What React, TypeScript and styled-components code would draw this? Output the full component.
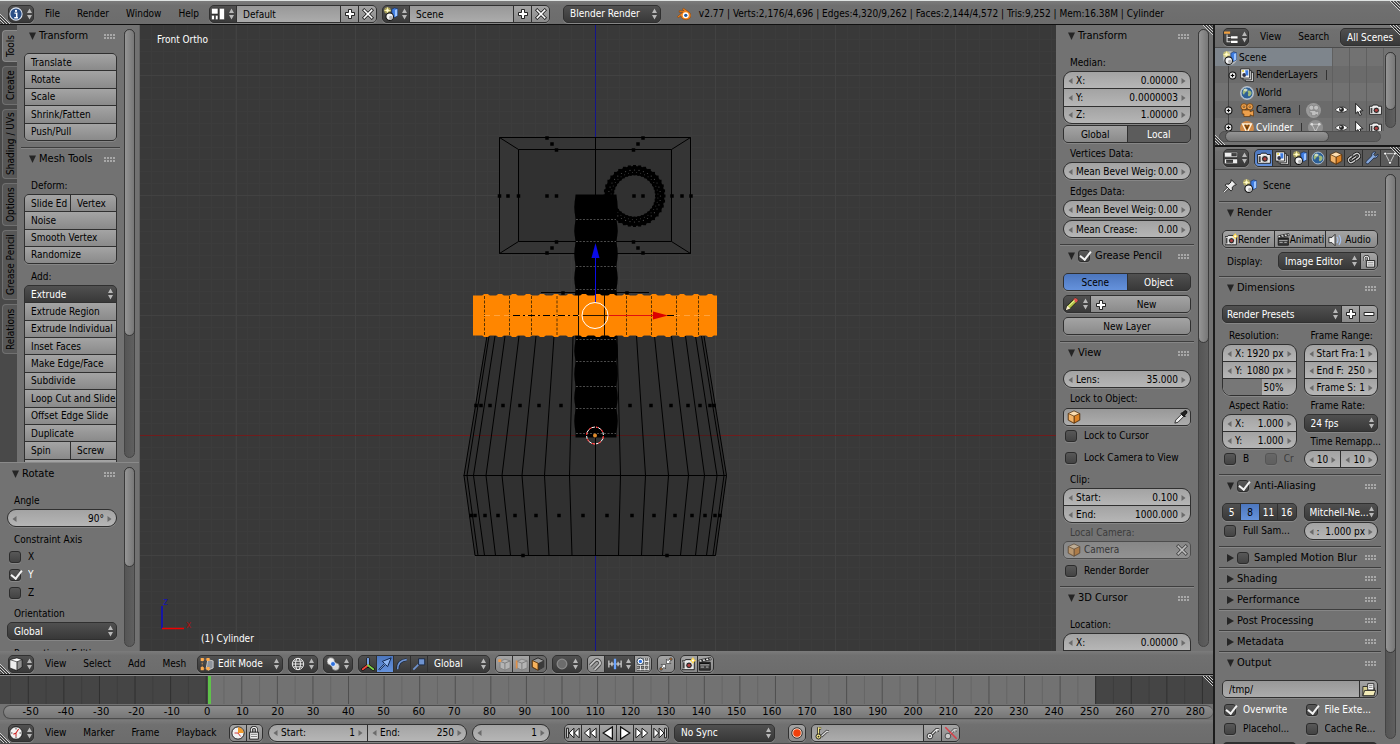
import React from "react";
import styled, { createGlobalStyle } from "styled-components";

const Global = createGlobalStyle`
  * { box-sizing: border-box; }
  html, body, #root { height: 100%; }
  body { margin: 0; background: #727272; overflow: hidden; }
  body, button, input, select {
    font-family: "DejaVu Sans Condensed", "DejaVu Sans", sans-serif;
    font-size: 10px;
    line-height: 16px;
    color: #000;
  }
  button, input, select { margin: 0; padding: 0; border: 0; background: none; border-radius: 0; outline: none; }
  svg { display: block; flex: none; }
`;

/* ---------- shared surfaces ---------- */

const EDGE = "#303030";
const tool = "linear-gradient(#a4a4a4, #8a8a8a)";
const num = "linear-gradient(#a3a3a3, #b6b6b6)";
const field = "linear-gradient(#989898, #adadad)";
const menu = "linear-gradient(#505050, #383838)";
const blue = "linear-gradient(#4c76bd, #6592dc)";

const Shell = styled.div`
  display: flex;
  flex-direction: column;
  height: 100vh;
  border-top: 1px solid #dfe3e2;
`;
const Main = styled.div`
  display: flex;
  flex: 1;
  min-height: 0;
`;
const Column = styled.div`
  display: flex;
  flex-direction: column;
  flex: 1;
  min-width: 0;
  border-right: 2px solid #1c1c1c;
`;
const Side = styled.aside`
  display: flex;
  flex-direction: column;
  width: 185px;
  flex: none;
`;
const Bar = styled.header<{ $h?: number; $dark?: boolean; $flush?: boolean }>`
  position: relative;
  display: flex;
  align-items: center;
  flex: none;
  height: ${(p) => p.$h ?? 24}px;
  padding: ${(p) => (p.$flush ? 0 : 2)}px 0 0 8px;
  gap: 5px;
  overflow: hidden;
  background: linear-gradient(#7b7b7b, #707070 20%, #6c6c6c);
  border-bottom: 1px solid ${(p) => (p.$dark ? "#101010" : "#4c4c4c")};
`;
const MenuList = styled.nav<{ $w: number }>`
  display: flex;
  gap: 17px;
  width: ${(p) => p.$w}px;
  padding-left: 6px;
  flex: none;
`;
const MenuItem = styled.button`
  white-space: nowrap;
`;

const Group = styled.div<{ $h?: number; $w?: number; $r?: number; $top?: number; $cols?: string; $dim?: boolean }>`
  display: grid;
  grid-auto-rows: 1fr;
  grid-template-columns: ${(p) => p.$cols ?? "minmax(0, 1fr)"};
  gap: 1px;
  height: ${(p) => p.$h ?? 18}px;
  ${(p) => p.$w && `width: ${p.$w}px;`}
  margin-top: ${(p) => p.$top ?? 0}px;
  flex: none;
  border: 1px solid ${EDGE};
  border-radius: ${(p) => p.$r ?? 5}px;
  background: ${EDGE};
  overflow: hidden;
  box-shadow: 0 1px 0 #868686;
  opacity: ${(p) => (p.$dim ? 0.55 : 1)};
`;
const Button = styled.button<{ $bg?: string; $white?: boolean; $left?: boolean }>`
  display: flex;
  align-items: center;
  justify-content: ${(p) => (p.$left ? "flex-start" : "center")};
  padding: 1px 0 0 ${(p) => (p.$left ? 6 : 0)}px;
  min-width: 0;
  min-height: 0;
  overflow: hidden;
  white-space: nowrap;
  background: ${(p) => p.$bg ?? tool};
  color: ${(p) => (p.$white ? "#fff" : "#000")};
  line-height: 14px;
`;
const GlyphButton = styled(Button)`
  padding-top: 0;
`;
const Pair = styled.div`
  display: grid;
  grid-template-columns: 1fr 1fr;
  gap: 1px;
  min-height: 0;
`;
const Columns = styled.div<{ $top?: number }>`
  display: grid;
  grid-template-columns: minmax(0, 1fr) minmax(0, 1fr);
  column-gap: 7px;
  margin-top: ${(p) => p.$top ?? 0}px;
`;
const Label = styled.div<{ $top?: number; $dim?: boolean }>`
  height: 18px;
  flex: none;
  line-height: 20px;
  padding-left: 7px;
  margin-top: ${(p) => p.$top ?? 0}px;
  white-space: nowrap;
  color: ${(p) => (p.$dim ? "#3c3c3c" : "#000")};
`;

/* ---------- fields ---------- */

const NumBox = styled.label<{ $fill?: boolean }>`
  display: flex;
  align-items: center;
  min-width: 0;
  min-height: 0;
  padding: 1px 4px 0;
  gap: 3px;
  line-height: 14px;
  white-space: nowrap;
  background: ${(p) => (p.$fill ? "linear-gradient(90deg, #777 54%, transparent 54%), " : "") + num};
`;
const NumInput = styled.input`
  flex: 1;
  width: 0;
  min-width: 0;
  height: 14px;
  line-height: 14px;
  text-align: right;
`;
const NumText = styled.span`
  display: flex;
  flex: 1;
  min-width: 0;
`;
const Tri = ({ d }: { d: "l" | "r" }) => (
  <svg width="5" height="8" viewBox="0 0 5 8">
    <path d={d === "l" ? "M4.5 1v6L.5 4z" : "M.5 1v6l4-3z"} fill="#6b6b6b" />
  </svg>
);
const Num = ({ label, value, name, bare, fill }: { label?: string; value: string; name?: string; bare?: boolean; fill?: boolean }) => (
  <NumBox $fill={fill}>
    {bare ? <svg width="5" height="8" /> : <Tri d="l" />}
    <NumText>
      {label}
      <NumInput defaultValue={value} aria-label={name ?? label} />
    </NumText>
    {bare ? <svg width="5" height="8" /> : <Tri d="r" />}
  </NumBox>
);

const SelectBox = styled.span`
  position: relative;
  display: flex;
  align-items: center;
  min-width: 0;
  min-height: 0;
  background: ${menu};
  svg { position: absolute; right: 2px; pointer-events: none; }
`;
const SelectEl = styled.select<{ $pad?: number }>`
  appearance: none;
  width: 100%;
  height: 16px;
  line-height: 14px;
  padding: 1px 8px 0 ${(p) => p.$pad ?? 6}px;
  color: #fff;
`;
const UpDown = ({ w = 7 }: { w?: number }) => (
  <svg width={w} height="12" viewBox="0 0 7 12">
    <path d="M3.5.5 6 5H1zM3.5 11.5 1 7h5z" fill="#b8b8b8" />
  </svg>
);
const Select = ({ name, value, pad }: { name: string; value: string; pad?: number }) => (
  <SelectBox>
    <SelectEl $pad={pad} aria-label={name} defaultValue={value}>
      <option>{value}</option>
    </SelectEl>
    <UpDown />
  </SelectBox>
);
const TextInput = styled.input`
  min-width: 0;
  width: 100%;
  padding: 1px 0 0 6px;
  background: ${field};
`;
const IconInput = styled.label`
  display: flex;
  align-items: center;
  gap: 3px;
  min-width: 0;
  padding: 0 2px 0 3px;
  background: ${field};
  input { flex: 1; width: 0; min-width: 0; height: 14px; }
`;

const CheckRow = styled.label<{ $top?: number; $on?: boolean; $dim?: boolean }>`
  display: flex;
  align-items: center;
  min-width: 0;
  height: 18px;
  gap: 7px;
  padding-left: 2px;
  margin-top: ${(p) => p.$top ?? 0}px;
  color: ${(p) => (p.$on ? "#fff" : p.$dim ? "#3c3c3c" : "#000")};
  span { overflow: hidden; white-space: nowrap; }
`;
const Check = styled.input.attrs({ type: "checkbox" })<{ $dim?: boolean }>`
  appearance: none;
  flex: none;
  display: grid;
  width: 12px;
  height: 12px;
  border: 1px solid #2c2c2c;
  border-radius: 3px;
  background: linear-gradient(#585858, #434343);
  box-shadow: 0 1px 0 #868686;
  opacity: ${(p) => (p.$dim ? 0.4 : 1)};
  &:checked::after {
    content: "";
    width: 5px;
    height: 9px;
    margin: -2px 0 0 3px;
    border: solid #f2f2f2;
    border-width: 0 2px 2px 0;
    transform: rotate(38deg);
  }
`;
const Tick = ({ label, on, ...rest }: { label: string; on?: boolean; $top?: number; $dim?: boolean }) => (
  <CheckRow $on={on} {...rest}>
    <Check defaultChecked={on} $dim={rest.$dim} />
    <span>{label}</span>
  </CheckRow>
);
const CheckStack = styled.div`
  display: grid;
  grid-auto-rows: 1fr;
  height: 52px;
  flex: none;
  align-items: center;
`;

/* ---------- panels ---------- */

const Shelf = styled.div<{ $w?: number; $h?: number }>`
  display: flex;
  gap: 4px;
  padding: 0 4px;
  min-height: 0;
  overflow: hidden;
  background: #727272;
  ${(p) => (p.$w ? `width: ${p.$w}px; flex: none;` : "flex: 1;")}
  ${(p) => p.$h && `height: ${p.$h}px; flex: none; border-top: 1px solid #8a8a8a;`}
`;
const ShelfBody = styled.div`
  flex: 1;
  min-width: 0;
  overflow: hidden;
`;
const PanelBox = styled.section<{ $closed?: boolean }>`
  display: flex;
  flex-direction: column;
  padding: 0 3px ${(p) => (p.$closed ? 0 : 6)}px;
  border-bottom: 1px solid #3e3e3e;
  box-shadow: 0 1px 0 #868686;
`;
const PanelHead = styled.h3<{ $closed?: boolean }>`
  display: flex;
  align-items: center;
  gap: 3px;
  height: ${(p) => (p.$closed ? 20 : 21)}px;
  margin: 0 0 ${(p) => (p.$closed ? 0 : 7)}px;
  padding: 1px 2px 0 5px;
  font-size: 11px;
  font-weight: 400;
  white-space: nowrap;
  input { margin: 0 2px 0 0; }
`;
const Grip = styled.span`
  width: 11px;
  height: 5px;
  margin-left: auto;
  flex: none;
  background: radial-gradient(circle at 1px 1px, #a8a8a8 0 1px, transparent 1px) 0 0 / 3px 3px;
`;
const Panel = ({ title, check, closed, children }: { title: string; check?: "on" | "off"; closed?: boolean; children?: React.ReactNode }) => (
  <PanelBox $closed={closed}>
    <PanelHead $closed={closed}>
      <svg width="7" height="8" viewBox="0 0 7 8">
        <path d={closed ? "M0 0v8l7-4z" : "M0 .5h7L3.500 8z"} fill="#252525" />
      </svg>
      {check && <Check defaultChecked={check === "on"} aria-label={title} />}
      {title}
      <Grip />
    </PanelHead>
    {children}
  </PanelBox>
);

const Track = styled.div<{ $bottom?: number }>`
  width: 11px;
  flex: none;
  margin: 4px 0 ${(p) => p.$bottom ?? 4}px;
  border: 1px solid #444;
  border-radius: 6px;
  background: linear-gradient(90deg, #555, #5f5f5f);
`;
const Thumb = styled.div<{ $size: number }>`
  height: ${(p) => p.$size}%;
  margin: -1px;
  border: 1px solid #3a3a3a;
  border-radius: 6px;
  background: linear-gradient(90deg, #959595, #777);
`;
const HTrack = styled.div`
  height: 11px;
  margin: 0 19px 0 4px;
  flex: none;
  border: 1px solid #505050;
  border-radius: 6px;
  background: #5e5e5e;
`;
const HThumb = styled.div`
  width: 65%;
  height: 11px;
  margin: -1px 0 0 5px;
  border: 1px solid #484848;
  border-radius: 6px;
  background: linear-gradient(#959595, #777);
`;
const CornerBox = styled.span<{ $at: "bl" | "tr" }>`
  position: absolute;
  ${(p) => (p.$at === "bl" ? "left: 0; bottom: 0;" : "right: 0; top: 0;")}
  z-index: 2;
  pointer-events: none;
`;
const Corner = ({ at }: { at: "bl" | "tr" }) => (
  <CornerBox $at={at}>
    <svg width="11" height="11" viewBox="0 0 11 11">
      {at === "bl" ? (
        <>
          <path d="M0 1 10 11M0 4l7 7M0 7l4 4" stroke="#d0d0d0" />
          <path d="M0 2.500 8.500 11M0 5.500 5.500 11M0 8.500 2.500 11" stroke="#222" />
        </>
      ) : (
        <>
          <path d="M1 0 11 10M4 0l7 7M7 0l4 4" stroke="#d0d0d0" />
          <path d="M2.500 0 11 8.500M5.500 0 11 5.500M8.500 0 11 2.500" stroke="#222" />
        </>
      )}
    </svg>
  </CornerBox>
);

/* ---------- icons, all on a 16 unit grid ---------- */

const art: Record<string, React.ReactNode> = {
  info: (<><circle cx="8" cy="8" r="7" fill="#2b4f86" stroke="#dfe6f2" strokeWidth="1.2" /><circle cx="8" cy="4.500" r="1.300" fill="#fff" /><path d="M6.200 7h2.600v5M6 12.200h4.200" stroke="#fff" strokeWidth="1.700" fill="none" /></>),
  layout: (<g fill="#fff" stroke="#111" strokeWidth=".6"><path d="M.5 1.500h7.500v6.500H.5zM.5 9.500H4v5H.5zM5 9.500h3v5H5zM9.500 1.500h6v13h-6z" /></g>),
  scene: (<><circle cx="4" cy="4" r="3.800" fill="#f0e36a" opacity=".55" /><path d="M4 .5v7M.5 4h7" stroke="#fff6a0" /><circle cx="4" cy="4" r="1.600" fill="#fffbd0" /><path d="M9 2.500l3-1.500 3.500 1V10L12 12 9 10z" fill="#3d7be0" stroke="#16305f" strokeWidth=".7" /><path d="M12.500 3.300 15.200 2.300V10l-2.700 1.200z" fill="#9cc4ff" /><circle cx="6.500" cy="11" r="4.300" fill="#f4f4f4" stroke="#111" strokeWidth="1.200" /><circle cx="7.800" cy="12" r="2" fill="#b4b4b4" /></>),
  plus: (<path d="M6 2h4v4h4v4h-4v4H6v-4H2V6h4z" fill="#fff" stroke="#111" strokeWidth="1.200" />),
  minus: (<path d="M1.500 6h13v4h-13z" fill="#fff" stroke="#111" strokeWidth="1.200" />),
  x: (<><path d="M3 3l10 10M13 3 3 13" stroke="#111" strokeWidth="4.200" strokeLinecap="square" /><path d="M3 3l10 10M13 3 3 13" stroke="#fff" strokeWidth="2.200" strokeLinecap="square" /></>),
  blender: (<><path d="M.5 11 6.500 6H2.500V4.300h5.700L6.200 2.500l1.300-1L14 6c3.500 3 2 8-3.300 8.500C7 14.500 4.600 12.500 4.500 10L1.500 12.300z" fill="#f5861c" stroke="#7a3a05" strokeWidth=".6" /><circle cx="10" cy="9.500" r="3.400" fill="#fff" /><circle cx="10" cy="9.500" r="1.900" fill="#245a9c" /></>),
  tree: (<><path d="M0 3h7" stroke="#f0a040" strokeWidth="2.600" /><path d="M3.500 5v8.500h4M3.500 8.500h4" stroke="#ddd" strokeWidth="1.200" fill="none" /><path d="M8 8.500h7.500M8 13.500h7.500" stroke="#fff" strokeWidth="2.600" /></>),
  props: (<g stroke="#111" strokeWidth=".6"><rect x=".5" y="1.500" width="15" height="5.500" rx="1" fill="#eee" /><rect x="9" y="2.800" width="5" height="2.800" fill="#444" /><rect x=".5" y="9" width="15" height="5.500" rx="1" fill="#eee" /><rect x="3" y="10.300" width="7" height="2.800" fill="#444" /></g>),
  camera: (<><path d="M.7 4H4l1-1.500h5.500L11.500 4h3.800v10H.7z" fill="#f0f0f0" stroke="#111" /><circle cx="9" cy="9" r="3.900" fill="#2a2a2a" stroke="#fff" strokeWidth=".9" /><circle cx="9" cy="9" r="1.900" fill="#b04040" /><path d="M2 6h2.200v6.500H2z" fill="#444" /></>),
  cameraNew: (<><path d="M0 4.500h3L4 3h6l1 1.500h3v10H0z" fill="#e8e8e8" stroke="#111" /><circle cx="8" cy="9.500" r="3.800" fill="#2a2a2a" stroke="#fff" strokeWidth=".9" /><circle cx="8" cy="9.500" r="1.800" fill="#b04040" /><path d="M1 6h2v7H1z" fill="#444" /><path d="M12.500 0 14 2.500 16 4l-2 1.500L12.500 8 11 5.500 9 4l2-1.500z" fill="#ffd84a" /><circle cx="12.500" cy="4" r="1.200" fill="#fff" /></>),
  layers: (<><path d="M6 5h9.500v10.500H6z" fill="#ccc" stroke="#222" /><path d="M3.500 3H13v10.500H3.500z" fill="#e4e4e4" stroke="#222" /><path d="M.8 1H11v10.500H.8z" fill="#f6f6f6" stroke="#222" /><circle cx="4.800" cy="8" r="2.200" fill="#334" /><path d="M6 2.500h3.500v6H6.500z" fill="#3d7be0" /><circle cx="3.500" cy="3.500" r="1.200" fill="#e6d23c" /></>),
  world: (<><circle cx="8" cy="8" r="6.800" fill="#2d5f96" stroke="#c4d4e4" strokeWidth=".9" /><path d="M4 4c2-2 4-1 4 1s-3 2-3 4-2 0-2-2zM10 5c2 0 3 1 3.300 3-.3 3-3 4.500-4 3s1-2.500 0-3.500S8.500 5 10 5z" fill="#9fb87a" /><ellipse cx="6.500" cy="4.500" rx="2.500" ry="1.500" fill="#fff" opacity=".5" /></>),
  cube: (<g stroke="#4a2a08" strokeWidth=".8"><path d="M8 1 14.500 4v7.500L8 15 1.500 11.500V4z" fill="#fbdcb0" /><path d="M8 7v8l6.500-3.500V4z" fill="#dd8326" /><path d="M8 7v8l-6.500-3.500V4z" fill="#f3b469" /></g>),
  link: (<g fill="none" transform="rotate(-35 8 8)"><path d="M7 5H4a3 3 0 0 0 0 6h3.500M9 5h3a3 3 0 0 1 0 6H8.500M5 8h6" stroke="#111" strokeWidth="3.200" /><path d="M7 5H4a3 3 0 0 0 0 6h3.500M9 5h3a3 3 0 0 1 0 6H8.500M5 8h6" stroke="#ccc" strokeWidth="1.500" /></g>),
  wrench: (<path d="M14.800 3.500 12 6 10 4l2.300-2.700C9 .3 7.300 3 7.800 5.500L1.200 12c-1 1.700.9 3.500 2.500 2.400L10.200 8c3 .7 5.200-1.500 4.600-4.500z" fill="#86a8dc" stroke="#16243c" strokeWidth=".9" />),
  mesh: (<g fill="none"><path d="M2.500 3h11L8 13.500z" stroke="#ccc" strokeWidth="1.100" /><g fill="#fff" stroke="#222" strokeWidth=".6"><circle cx="2.500" cy="3" r="1.700" /><circle cx="13.500" cy="3" r="1.700" /><circle cx="8" cy="13.500" r="1.700" /></g></g>),
  cone: (<><circle cx="8" cy="8" r="8" fill="#d08a48" /><path d="M3 3.500h10L8 13.500z" fill="#b96a1c" stroke="#fff3dd" strokeWidth="1.600" /><path d="M6 4l2 5 2-5" fill="none" stroke="#3b2206" strokeWidth=".8" /></>),
  pin: (<><path d="M.8 15.200 6 10" stroke="#111" strokeWidth="2.600" /><path d="M.8 15.200 6 10" stroke="#eee" strokeWidth="1.300" /><path d="M9.500.8 15.200 6.500 13 7.200l-2.500 2.300.2 3-1.500 1.200L2.500 7l1.300-1.300 3 .2L9 3.500z" fill="#ececec" stroke="#111" strokeWidth="1" /></>),
  clap: (<><path d="M1.500 6h12.500v9H1.500z" fill="#3c3c3c" stroke="#111" /><path d="M1 3.500 14.500.5l.6 2.700L1.700 6z" fill="#eee" stroke="#111" strokeWidth=".8" /><path d="M4 3 5.500 5M8 2l1.500 2.300M12 1.300l1 2M2 7.500h11" stroke="#111" strokeWidth="1.400" /><path d="M2.500 9h10.500M3 11.500h4M9 11.500h3" stroke="#ddd" strokeWidth=".9" /></>),
  speaker: (<><path d="M1 5h3.500L8 1.500v13L4.500 11H1z" fill="#eee" stroke="#222" /><path d="M10.200 4.500q2.300 3.500 0 7M12.500 2.500q4 5.500 0 11" stroke="#a8c2ee" strokeWidth="1.400" fill="none" /></>),
  unlock: (<><path d="M2.500 8V5a2.500 2.500 0 0 1 5 0v2" fill="none" stroke="#222" strokeWidth="2.600" /><path d="M2.500 8V5a2.500 2.500 0 0 1 5 0v2" fill="none" stroke="#eee" strokeWidth="1.200" /><path d="M5 7.500h9.500V15H5z" fill="#eee" stroke="#111" /><path d="M6.500 10h6.500M6.500 12.500h6.500" stroke="#777" /></>),
  lock: (<><path d="M5 8V4.500a3 3 0 0 1 6 0V8" fill="none" stroke="#222" strokeWidth="3" /><path d="M5 8V4.500a3 3 0 0 1 6 0V8" fill="none" stroke="#eee" strokeWidth="1.300" /><path d="M3 7h10v8H3z" fill="#eee" stroke="#111" /><path d="M4.500 9.500h7M4.500 12h7" stroke="#777" /></>),
  pencil: (<><path d="M1 15l1.500-5L11 1.500c2-.8 4 1 3.500 3L6 13z" fill="#b5c64a" stroke="#111" strokeWidth=".9" /><path d="M11 1.500c2-.8 4 1 3.500 3L12.500 6.500 9.500 3z" fill="#e05050" /><path d="M1 15l1.500-5L6 13z" fill="#f8ecd0" /><path d="M4 10.500 11 4" stroke="#eef2a8" /></>),
  dropper: (<><path d="M1 15l1-3.500 6.500-6.500 2.500 2.500L4.500 14z" fill="#eee" stroke="#111" strokeWidth=".9" /><path d="M8 4l4 4 1-1-1-1 2.500-2.500c1-2-1-3.500-2.500-2.500L9.500 3.500 9 3z" fill="#222" stroke="#000" /></>),
  folder: (<><path d="M1 4h5l1 1.500h7V14.500H1z" fill="#d8cf90" stroke="#222" /><path d="M6.500.8h7V8h-7z" fill="#fff" stroke="#222" /><path d="M8 3h4M8 5h4" stroke="#555" strokeWidth=".8" /><path d="M3 8.500h12.700l-2.200 6H1z" fill="#f3ecb8" stroke="#222" /></>),
  eye: (<><path d="M.5 8.500C4 3.500 12 3.500 15.500 8.500 12 12.500 4 12.500.5 8.500z" fill="#fff" stroke="#222" /><circle cx="8" cy="8" r="3" fill="#222" /><circle cx="7.200" cy="7" r="1" fill="#fff" /></>),
  cursor: (<path d="M4.500.5v12.500l2.900-2.400 2 4.700 2.300-1-2.100-4.400 3.700-.5z" fill="#fff" stroke="#111" strokeWidth="1.100" />),
  movie: (<g stroke="#5a3208" strokeWidth=".8" fill="#eda04c"><circle cx="4.500" cy="4.300" r="3.600" /><circle cx="11.300" cy="4.300" r="3.600" /><path d="M2.500 8h9v2l4-1.500v6.500L11.500 13.500v2H4.500v-3h-2z" /><circle cx="4.500" cy="4.300" r="1" fill="#ffe0b0" /><circle cx="11.300" cy="4.300" r="1" fill="#ffe0b0" /></g>),
  movieGrey: (<><circle cx="8" cy="8" r="8" fill="#9a9a9a" /><g stroke="#808080" strokeWidth=".8" fill="#c0c0c0"><circle cx="5.800" cy="5" r="2.700" /><circle cx="10.800" cy="5" r="2.700" /><path d="M4 8h6.500v1.500l3-1v5l-3-1.500v1.500H6v-3H4z" /></g></>),
  meshGrey: (<><circle cx="8" cy="8" r="8" fill="#909090" /><path d="M4 4.500h8L8 12.500z" fill="none" stroke="#c8c8c8" /><g fill="#ddd"><circle cx="4" cy="4.500" r="1.400" /><circle cx="12" cy="4.500" r="1.400" /><circle cx="8" cy="12.500" r="1.400" /></g></>),
  expand: (<><circle cx="8" cy="8" r="5" fill="#eee" stroke="#111" strokeWidth="1.600" /><path d="M5.500 8h5M8 5.500v5" stroke="#000" strokeWidth="1.700" /></>),
  view3d: (<g stroke="#111" strokeWidth=".7"><path d="M1 3 9 1l6 2v8.500L9 15.500l-8-3z" fill="#fff" /><path d="M9 5.500 15 3v8.500l-6 4z" fill="#8e8e8e" /><path d="M1 3l8 2.500v10l-8-3z" fill="#eee" /></g>),
  clock: (<><circle cx="8" cy="8" r="7.200" fill="#f2f2f2" stroke="#111" /><path d="M8 2v2M8 12v2M2 8h2M12 8h2" stroke="#333" /><path d="M8 8l3-4.500M8 8 5 9.500M8 8v4" stroke="#c22" strokeWidth="1.200" /></>),
  pie: (<><circle cx="8" cy="8" r="7" fill="#f2f2f2" stroke="#111" /><path d="M8 1.500A6.500 6.500 0 0 1 14.500 8H8z" fill="#f09a2a" /><path d="M8 8l3 4M8 8H4" stroke="#c22" /></>),
  edit: (<><path d="M9 3 15 4.500v8L9.500 15 7 13z" fill="#8e949c" stroke="#ddd" strokeWidth=".9" /><path d="M2.500 3v10M3 2.500h6M3 13.500h6" stroke="#e8a055" fill="none" strokeDasharray="2 1.500" /><g fill="#ffab4d"><path d="M.8 1h3.500v3.500H.8zM.8 11.500h3.500V15H.8zM7.500 1H11v3.500H7.500zM7.500 11.500H11V15H7.500z" /></g></>),
  wire: (<g fill="none" stroke="#eee" strokeWidth="1.100"><circle cx="8" cy="8" r="6.500" /><ellipse cx="8" cy="8" rx="2.800" ry="6.500" /><path d="M1.500 8h13M2.800 4.800h10.400M2.800 11.200h10.400" /></g>),
  pivot: (<><circle cx="5.500" cy="5" r="4.300" fill="#eee" stroke="#555" strokeWidth=".6" /><circle cx="11" cy="11" r="4.300" fill="#d8d8d8" stroke="#555" strokeWidth=".6" /><circle cx="8" cy="8" r="2.800" fill="#2b6fe0" stroke="#fff" strokeWidth=".8" /></>),
  axes: (<g strokeLinecap="round"><path d="M8 9.500V2M8 9.500 2 14M8 9.500l6 4.500" stroke="#111" strokeWidth="3.600" /><g strokeWidth="2.200"><path d="M8 9V2" stroke="#7aa7f0" /><path d="M8 9.500 2 14" stroke="#f0453a" /><path d="M8 9.500l6 4.500" stroke="#7cd24a" /></g></g>),
  arrow: (<path d="M2 15 1 14 7.500 7.500 5 5 15 1 11 11 8.500 8.500z" fill="#8db4f0" stroke="#10244a" strokeWidth="1.100" />),
  arc: (<><path d="M3 14Q3 4 13.500 3" fill="none" stroke="#16243c" strokeWidth="3.400" /><path d="M3 14Q3 4 13.500 3" fill="none" stroke="#6f93d0" strokeWidth="1.800" /></>),
  scale: (<><path d="M1.500 14.500 9 7" stroke="#6f93d0" strokeWidth="2" /><path d="M7.500 2h7v7h-7z" fill="#6f93d0" stroke="#16243c" /></>),
  vert: (<><path d="M9 2.500l6 2v8L9 15l-5.500-2.500V5z" fill="#b4b4b4" stroke="#777" strokeWidth=".8" /><path d="M9 7v8M9 7 3.500 5M9 7l6-2.500" stroke="#777" /><path d="M1.500 2.500h3.300v3.300H1.500z" fill="#f09a4a" /></>),
  edge: (<><path d="M9 2.500l6 2v8L9 15l-5.500-2.500V5z" fill="#b4b4b4" stroke="#777" strokeWidth=".8" /><path d="M9 7v8M9 7 3.500 5M9 7l6-2.500" stroke="#777" /><path d="M3 4v9" stroke="#e09048" strokeWidth="1.900" /></>),
  face: (<><path d="M8 1 14.500 4v7.500L8 15 1.500 11.500V4z" fill="#999" stroke="#222" /><path d="M8 7l6.500-3v7.500L8 15z" fill="#3a3a3a" /><path d="M1.500 4 8 7v8l-6.500-3.500z" fill="#f7b25c" stroke="#5b3408" /></>),
  dot: (<circle cx="8" cy="8" r="5.500" fill="#6c6c6c" stroke="#888" strokeWidth="1.500" />),
  magnet: (<g fill="none" transform="rotate(45 8 8)"><path d="M4.500 14V6.500a3.500 3.500 0 0 1 7 0V14" stroke="#444" strokeWidth="4" /><path d="M4.500 14V6.500a3.500 3.500 0 0 1 7 0V14" stroke="#c4c4c4" strokeWidth="2" /></g>),
  ruler: (<><path d="M1 4v8M15 4v8M4.500 5.500v5M11.500 5.500v5M1 8h14" stroke="#ddd" strokeWidth="1.300" /><path d="M8 2v12" stroke="#6aa4ff" strokeWidth="2.600" /></>),
  snap: (<><path d="M1 5h14M1 9.500h14M1 14h14M5 1v14M10 1v14M14 1v14" stroke="#333" strokeWidth="2.600" /><path d="M1 5h14M1 9.500h14M1 14h14M5 1v14M10 1v14M14 1v14" stroke="#eee" strokeWidth="1.200" /><circle cx="5" cy="5" r="3.800" fill="#fff" stroke="#234" /><circle cx="5" cy="5" r="1.900" fill="#2b6fe0" /></>),
  merge: (<g stroke="#222" strokeWidth=".7"><path d="M8.500 2.500v5h5l-1.700-1.700L14.500 3 13 1.500 10.200 4.200z" fill="#fff" /><path d="M7.500 13.500v-5h-5l1.700 1.700L1.500 13 3 14.500l2.800-2.700z" fill="#fff" /><path d="M12.500 1.200h2.300v2.300h-2.300zM1.200 12.500h2.300v2.300H1.200z" fill="#f09a4a" /></g>),
  rec: (<><circle cx="8" cy="8" r="6" fill="#f5d8c8" stroke="#222" /><circle cx="8" cy="8" r="4.300" fill="#f0400c" /></>),
  keyset: (<><path d="M4 10V1.500M4 2.500h3" stroke="#111" strokeWidth="3" /><path d="M4 10V1.500M4 2.500h3" stroke="#f4e689" strokeWidth="1.500" /><path d="M7 12l6.500-6 2 .5" stroke="#333" strokeWidth="3.200" fill="none" /><path d="M7 12l6.500-6 2 .5" stroke="#ddd" strokeWidth="1.500" fill="none" /><circle cx="4" cy="12" r="2.900" fill="#f4e689" stroke="#111" /><circle cx="4" cy="12" r="1" fill="#222" /></>),
  key: (<><path d="M6 10l6-6 3 .5M12 4l.5 3" stroke="#222" strokeWidth="3.400" fill="none" /><path d="M6 10l6-6 3 .5M12 4l.5 3" stroke="#e8e8e8" strokeWidth="1.500" fill="none" /><circle cx="4.500" cy="11.500" r="3.200" fill="#eee" stroke="#222" /><circle cx="4.500" cy="11.500" r="1" fill="#222" /></>),
  keyOff: (<><path d="M6 10l6-6 3 .5M12 4l.5 3" stroke="#555" strokeWidth="3.400" fill="none" /><path d="M6 10l6-6 3 .5M12 4l.5 3" stroke="#ccc" strokeWidth="1.500" fill="none" /><circle cx="4.500" cy="11.500" r="3.200" fill="#ccc" stroke="#444" /><path d="M1.500 1.500l13 13" stroke="#d8404a" strokeWidth="1.800" /></>),
  first: (<path d="M.7 2.500h2v11h-2zM9 2.500v11L3.500 8zM15 2.500v11L9.500 8z" fill="#fff" stroke="#111" strokeWidth="1.100" />),
  back: (<path d="M8 2.500v11L1.500 8zM15 2.500v11L8.500 8z" fill="#fff" stroke="#111" strokeWidth="1.100" />),
  rplay: (<path d="M13 1v14L2.500 8z" fill="#fff" stroke="#111" strokeWidth="1.400" />),
  play: (<path d="M3 1v14l10.500-7z" fill="#fff" stroke="#111" strokeWidth="1.400" />),
  fwd: (<path d="M8 2.500v11L14.500 8zM1 2.500v11L7.500 8z" fill="#fff" stroke="#111" strokeWidth="1.100" />),
  last: (<path d="M15.300 2.500h-2v11h2zM7 2.500v11L12.500 8zM1 2.500v11L6.500 8z" fill="#fff" stroke="#111" strokeWidth="1.100" />),
};
const Icon = ({ n, s = 14 }: { n: string; s?: number }) => (
  <svg width={s} height={s} viewBox="0 0 16 16">{art[n]}</svg>
);

const IconButton = ({ n, name, bg, s }: { n: string; name: string; bg?: string; s?: number }) => (
  <GlyphButton aria-label={name} $bg={bg}>
    <Icon n={n} s={s} />
  </GlyphButton>
);
const DropIcon = styled(GlyphButton).attrs({ $bg: menu })`
  gap: 3px;
`;
const Type = ({ n, name, w = 26 }: { n: string; name: string; w?: number }) => (
  <Group $w={w}>
    <DropIcon aria-label={name}>
      <Icon n={n} />
      <UpDown />
    </DropIcon>
  </Group>
);
const Push = styled.span<{ $w: number }>`
  width: ${(p) => p.$w}px;
  flex: none;
`;
const IconSelect = styled.span`
  display: flex;
  align-items: center;
  min-width: 0;
  padding-left: 2px;
  background: ${menu};
  > span { flex: 1; background: none; }
`;

/* ---------- tool shelf ---------- */

const LeftShelf = styled.div`
  display: flex;
  flex-direction: column;
  width: 140px;
  flex: none;
  border-right: 1px solid #626262;
`;
const ToolArea = styled.div`
  display: flex;
  flex: 1;
  min-height: 0;
`;
const Tabs = styled.div`
  display: flex;
  flex-direction: column;
  align-items: flex-end;
  gap: 4px;
  width: 17px;
  flex: none;
  padding-top: 5px;
  background: #494949;
`;
const Tab = styled.button<{ $h: number; $on?: boolean }>`
  width: 15px;
  height: ${(p) => p.$h}px;
  flex: none;
  line-height: 13px;
  writing-mode: vertical-rl;
  transform: rotate(180deg);
  white-space: nowrap;
  border: 1px solid ${(p) => (p.$on ? "#8a8a8a" : "#707070")};
  border-left: 0;
  border-radius: 0 4px 4px 0;
  background: ${(p) => (p.$on ? "#727272" : "#575757")};
`;
const tabs: [string, number][] = [["Tools", 32], ["Create", 39], ["Shading / UVs", 70], ["Options", 43], ["Grease Pencil", 70], ["Relations", 50]];

const ToolShelf = () => (
  <LeftShelf>
    <ToolArea>
      <Tabs role="tablist">
        {tabs.map(([t, h], i) => (
          <Tab key={t} role="tab" $h={h} $on={i === 0}>{t}</Tab>
        ))}
      </Tabs>
      <Shelf>
        <ShelfBody>
          <Panel title="Transform">
            <Group $h={88}>
              {["Translate", "Rotate", "Scale", "Shrink/Fatten", "Push/Pull"].map((t) => <Button key={t} $left>{t}</Button>)}
            </Group>
          </Panel>
          <Panel title="Mesh Tools">
            <Label>Deform:</Label>
            <Group $h={70}>
              <Pair><Button $left>Slide Ed</Button><Button $left>Vertex</Button></Pair>
              {["Noise", "Smooth Vertex", "Randomize"].map((t) => <Button key={t} $left>{t}</Button>)}
            </Group>
            <Label $top={3}>Add:</Label>
            <Group $h={192}>
              <Select name="Extrude mode" value="Extrude" />
              {["Extrude Region", "Extrude Individual", "Inset Faces", "Make Edge/Face", "Subdivide", "Loop Cut and Slide", "Offset Edge Slide", "Duplicate"].map((t) => <Button key={t} $left>{t}</Button>)}
              <Pair><Button $left>Spin</Button><Button $left>Screw</Button></Pair>
              <Button $left aria-label="Knife" />
            </Group>
          </Panel>
        </ShelfBody>
        <Track><Thumb $size={72} /></Track>
      </Shelf>
    </ToolArea>
    <Shelf $h={189}>
      <ShelfBody>
        <Panel title="Rotate">
          <Label>Angle</Label>
          <Group $r={9}><Num value="90°" name="Angle" /></Group>
          <Label $top={3}>Constraint Axis</Label>
          <CheckStack><Tick label="X" /><Tick label="Y" on /><Tick label="Z" /></CheckStack>
          <Label $top={4}>Orientation</Label>
          <Group><Select name="Orientation" value="Global" /></Group>
          <Label $top={4}>Proportional Editing</Label>
        </Panel>
      </ShelfBody>
      <Track><Thumb $size={56} /></Track>
    </Shelf>
  </LeftShelf>
);

/* ---------- 3D view ---------- */

const Stage = styled.div`
  position: relative;
  flex: 1;
  min-width: 0;
  background: #393939;
  overflow: hidden;
  > svg { position: absolute; inset: 0; width: 100%; height: 100%; }
`;
const Caption = styled.span<{ $at: "top" | "bottom" }>`
  position: absolute;
  left: ${(p) => (p.$at === "top" ? 17 : 61)}px;
  ${(p) => (p.$at === "top" ? "top: 7px;" : "bottom: 4px;")}
  color: #fff;
`;

const range = (a: number, b: number, s: number) => Array.from({ length: Math.floor((b - a) / s) + 1 }, (_, i) => a + i * s);
const spokes = [
  [487, 464, 475], [489, 467, 478], [495, 473.5, 484.5], [505, 486, 495.5], [519, 502, 510.5], [536, 522, 528.5],
  [554, 544.5, 549], [573, 569.5, 572], [595.5, 595.5, 595.5], [617, 620.5, 618.5], [636.5, 645.5, 641.5],
  [654.5, 668.5, 662.5], [671.5, 688.5, 680.5], [685.5, 704.5, 695.5], [695.5, 717, 706.5], [701.5, 724, 713], [704, 726.5, 715.5],
];
const dots: [number[], number][] = [
  [[547, 643], 138], [[552, 638], 144], [[556.5, 633.5], 150], [[499.5, 508, 518.5, 547, 556.5, 634, 643, 672, 682, 691], 196],
  [[556.5, 633.5], 242], [[552, 638], 248], [[547, 643], 253], [[563, 627], 293],
  [[476, 481, 490, 503, 520, 539, 561, 630, 651, 671, 688, 700, 710, 714], 405.5],
  [[471, 475, 485, 498, 515, 536, 559, 583, 607, 632, 654, 675, 692, 705, 715, 720], 515.5],
  [[523, 667], 555.5],
];
const ringPoints = range(0, 35, 1).map((i) => (i * Math.PI * 2) / 36);
const bumps = range(482, 706, 14);
const rings = [195, 219.5, 241.5, 266.5, 289.5, 314, 339.5, 361.5, 386.5, 408.5, 433.5];

const Wireframe = () => (
  <svg viewBox="140 25 916 626" preserveAspectRatio="xMidYMid slice" fontSize="10">
    <path d={range(152, 1056, 12).map((x) => `M${x - 0.5} 25v626`).join("") + range(40, 651, 12).map((y) => `M140 ${y - 0.5}h916`).join("")} stroke="#3c3c3c" />
    <path d={[236, 355, 475, 715, 835, 955].map((x) => `M${x + 0.5} 25v626`).join("") + [75, 195, 315, 555].map((y) => `M140 ${y + 0.5}h916`).join("")} stroke="#424242" />
    <path d="M140 435.500h916" stroke="#701c1c" />
    <path d="M595.500 25v626" stroke="#14148c" />
    <path d="M499.500 137.500h191v116h-191z" fill="#353535" stroke="#000" />
    <path d="M518.500 149.500h153v92h-153z" fill="#303030" stroke="#000" />
    <path d="M499.500 137.500l19 12M690.500 137.500l-19 12M499.500 253.500l19-12M690.500 253.500l-19-12M595.500 137v60" stroke="#000" fill="none" />
    <path d="M487 336h217l22.500 139.500-11 80h-240.500l-11-80z" fill="#303030" />
    <path d="M473 435.500h246" stroke="#501a1a" />
    <path d={spokes.map(([a, b, c]) => `M${a} 336 ${b} 475.5 ${c} 555.5`).join("")} fill="none" stroke="#000" />
    <path d="M463.500 475.500h263M475 555.500h240.500M541 292.500h108" stroke="#000" />
    <circle cx="634.500" cy="196" r="25.500" fill="none" stroke="#000" strokeWidth="9" />
    {ringPoints.map((a) => (
      <g key={a}>
        <rect x={633 + 29.5 * Math.cos(a)} y={194.5 + 29.5 * Math.sin(a)} width="3" height="3" />
        <rect x={633.5 + 21.5 * Math.cos(a)} y={195 + 21.5 * Math.sin(a)} width="2" height="2" />
        <circle cx={634.5 + 26 * Math.cos(a)} cy={196 + 26 * Math.sin(a)} r=".6" fill="#4a4a4a" />
        <circle cx={634.5 + 23.5 * Math.cos(a + 0.09)} cy={196 + 23.5 * Math.sin(a + 0.09)} r=".5" fill="#3c3c3c" />
      </g>
    ))}
    <path d="M575.500 194.500h41v243h-41z" />
    {rings.slice(1).map((y, i) => (
      <path key={y} d={`M576 ${rings[i]}Q572.500 ${(y + rings[i]) / 2} 576 ${y}H616Q619.500 ${(y + rings[i]) / 2} 616 ${rings[i]}z`} />
    ))}
    <path d={rings.slice(1).map((y) => `M576 ${y}h40`).join("")} stroke="#4a4a4a" strokeDasharray="2 1.500" />
    <path d="M473 295.500h244v40h-244z" fill="#ff8600" />
    {bumps.map((x) => (
      <path key={x} d={`M${x} 296l2-2h4l2 2zM${x} 335l2 2h4l2-2z`} fill="#ff8600" />
    ))}
    <path d="M484.500 296v40M509.500 296v40M531.500 296v40M557 296v40M626.500 296v40M651.500 296v40M676.500 296v40M698.500 296v40" stroke="#5a3300" strokeDasharray="3 1.500" />
    <path d="M578.500 295v41M604.500 295v41" stroke="#1a0d00" />
    <path d="M484 315.500h230" stroke="#ffa33d" strokeDasharray="6 4" />
    <path d="M513 315.500h65M652 315.500h25" stroke="#000" strokeDasharray="7 3 2 3" />
    <path d="M583 315.500h25" stroke="#2a1500" />
    {dots.map(([xs, y]) => xs.map((x) => <rect key={`${x}-${y}`} x={x - 1.75} y={y - 1.75} width="3.500" height="3.500" />))}
    <path d="M595.500 303v-45" stroke="#0a0ae6" />
    <path d="M595.500 243l4 15h-8z" fill="#0a0ae6" />
    <path d="M608 315.500h45" stroke="#e01010" />
    <path d="M653 311.500l15 4-15 4z" fill="#dc0000" />
    <circle cx="595" cy="315.500" r="13" fill="none" stroke="#fff" />
    <circle cx="595" cy="435.500" r="8.500" fill="none" stroke="#fff" />
    <circle cx="595" cy="435.500" r="8.500" fill="none" stroke="#f00" strokeDasharray="3.300 3.300" />
    <path d="M595.500 425v6M595.500 440v6M585 435.500h6M600 435.500h6" stroke="#000" />
    <circle cx="595" cy="435.500" r="2" fill="#e08a2a" />
    <path d="M162 606v22.500" stroke="#0b0bc8" strokeWidth="1.500" />
    <path d="M162 628.500h22" stroke="#f00000" strokeWidth="1.500" />
    <text x="163" y="605" fill="#1515b0">z</text>
    <text x="186" y="628" fill="#a01010">x</text>
  </svg>
);

/* ---------- 3D view side panel ---------- */

const NewButton = styled(Button)`
  justify-content: flex-start;
  padding-left: 4px;
  span { flex: 1; text-align: center; padding-right: 4px; }
`;

const ViewPanel = () => (
  <Shelf $w={157}>
    <ShelfBody>
      <Panel title="Transform">
        <Label>Median:</Label>
        <Group $h={53} $r={9}>
          <Num label="X:" value="0.00000" /><Num label="Y:" value="0.0000003" /><Num label="Z:" value="1.00000" />
        </Group>
        <Group $top={1} $cols="1fr 1fr"><Button>Global</Button><Button $bg="#5c5c5c" $white>Local</Button></Group>
        <Label $top={1}>Vertices Data:</Label>
        <Group $r={9}><Num label="Mean Bevel Weig:" value="0.00" /></Group>
        <Label $top={2}>Edges Data:</Label>
        <Group $r={9}><Num label="Mean Bevel Weig:" value="0.00" /></Group>
        <Group $r={9} $top={2}><Num label="Mean Crease:" value="0.00" /></Group>
      </Panel>
      <Panel title="Grease Pencil" check="on">
        <Group $cols="1fr 1fr"><Button $bg={blue}>Scene</Button><Button $bg={menu} $white>Object</Button></Group>
        <Group $top={4} $cols="26px minmax(0, 1fr)">
          <DropIcon aria-label="Grease pencil data"><Icon n="pencil" /><UpDown /></DropIcon>
          <NewButton><Icon n="plus" s={12} /><span>New</span></NewButton>
        </Group>
        <Group $top={4}><Button>New Layer</Button></Group>
      </Panel>
      <Panel title="View">
        <Group $r={9}><Num label="Lens:" value="35.000" /></Group>
        <Label $top={1}>Lock to Object:</Label>
        <Group $top={1}><IconInput><Icon n="cube" /><input aria-label="Lock to Object" /><Icon n="dropper" /></IconInput></Group>
        <Tick $top={1} label="Lock to Cursor" />
        <Tick $top={4} label="Lock Camera to View" />
        <Label $top={3}>Clip:</Label>
        <Group $h={35} $r={9}><Num label="Start:" value="0.100" /><Num label="End:" value="1000.000" /></Group>
        <Label $dim>Local Camera:</Label>
        <Group $dim><IconInput><Icon n="cube" /><input aria-label="Local Camera" defaultValue="Camera" /><Icon n="x" s={12} /></IconInput></Group>
        <Tick $top={3} label="Render Border" />
      </Panel>
      <Panel title="3D Cursor">
        <Label>Location:</Label>
        <Group $h={35} $r={9}><Num label="X:" value="0.00000" /><NumBox /></Group>
      </Panel>
    </ShelfBody>
    <Track><Thumb $size={51} /></Track>
  </Shelf>
);

const ViewRow = styled.div`
  position: relative;
  display: flex;
  flex: 1;
  min-height: 0;
`;

/* ---------- timeline ---------- */

const Graph = styled.div`
  position: relative;
  height: 29px;
  flex: none;
  background: #727272;
  border-top: 1px solid #8a8a8a;
  > svg { width: 100%; height: 28px; }
`;
const Ruler = styled.div`
  display: grid;
  grid-template-columns: repeat(34, minmax(0, 1fr));
  height: 14px;
  margin: 1px 0 1px 3px;
  padding-left: 9px;
  flex: none;
  border: 1px solid #4c4c4c;
  border-right: 0;
  border-radius: 7px;
  background: linear-gradient(#8e8e8e, #767676);
  font-family: "DejaVu Sans", sans-serif;
  line-height: 12px;
  text-align: center;
`;
const frameX = (f: number) => 206.2 + f * 3.558;

const Timeline = () => (
  <>
    <Graph>
      <svg viewBox="0 0 1213 28" preserveAspectRatio="none">
        <path d="M0 0h209v28H0zM1095 0h118v28h-118z" fill="#454545" />
        {range(-55, 280, 5).map((f) => (
          <path key={f} d={`M${frameX(f)} 0v28`} stroke="#000" opacity={f % 10 ? 0.1 : 0.3} />
        ))}
        <path d="M209.500 0v28" stroke="#5fc24a" strokeWidth="3" />
      </svg>
      <Corner at="tr" />
    </Graph>
    <Ruler>
      {range(-50, 280, 10).map((f) => <span key={f}>{f}</span>)}
    </Ruler>
  </>
);

/* ---------- outliner ---------- */

const Outliner = styled.div`
  display: flex;
  flex-direction: column;
  height: 99px;
  flex: none;
  padding-bottom: 3px;
  border-bottom: 2px solid #161616;
  position: relative;
`;
const TreeRow = styled.div`
  display: flex;
  flex: 1;
  min-height: 0;
`;
const Tree = styled.ul`
  flex: 1;
  height: 83px;
  margin: 0;
  padding: 0;
  overflow: hidden;
  list-style: none;
  border-right: 1px solid #606060;
`;
const Item = styled.li<{ $i: number; $sel?: boolean; $white?: boolean }>`
  display: grid;
  grid-template-columns: minmax(0, 1fr) repeat(3, 17px);
  height: ${(p) => (p.$i % 2 ? 17 : 18)}px;
  background: ${(p) => (p.$sel ? "" : "linear-gradient(#454545, #454545) 13px 0 / 1px 100% no-repeat, ") + (p.$i % 2 ? "linear-gradient(#6b6b6b, #6b6b6b)" : "linear-gradient(#727272, #727272)")};
  color: ${(p) => (p.$white ? "#fff" : "#000")};
  > div:first-child { background: ${(p) => (p.$sel ? "#7e858c" : "none")}; }
`;
const ItemName = styled.div<{ $pad: number }>`
  display: flex;
  align-items: center;
  gap: 2px;
  padding: 1px 0 0 ${(p) => p.$pad}px;
  white-space: nowrap;
`;
const Disc = styled.span`
  border-radius: 8px;
  background: #b4b8bc;
`;
const ItemCell = styled.div`
  display: grid;
  place-items: center;
  border-left: 1px solid #606060;
`;
const Rule = styled.span`
  width: 1px;
  height: 10px;
  margin: 0 4px 0 6px;
  background: #333;
`;
const toggles = (on: boolean) => ["eye", "cursor", "camera"].map((n) => <ItemCell key={n}>{on && <Icon n={n} s={13} />}</ItemCell>);

const TreeTrack = styled(Track)`
  margin: 4px 4px 3px 1px;
`;

const OutlinerView = () => (
  <Outliner>
    <TreeRow>
      <Tree>
        <Item $i={0} $sel><ItemName $pad={8}><Disc><Icon n="scene" /></Disc>Scene</ItemName>{toggles(false)}</Item>
        <Item $i={1}><ItemName $pad={12}><Icon n="expand" s={11} /><Icon n="layers" />RenderLayers<Rule /></ItemName>{toggles(false)}</Item>
        <Item $i={2}><ItemName $pad={25}><Disc><Icon n="world" /></Disc>World</ItemName>{toggles(false)}</Item>
        <Item $i={3}><ItemName $pad={8}><Icon n="expand" s={11} /><Push $w={2} /><Icon n="movie" />Camera<Rule /><Icon n="movieGrey" s={15} /></ItemName>{toggles(true)}</Item>
        <Item $i={4} $white><ItemName $pad={8}><Icon n="expand" s={11} /><Push $w={2} /><Icon n="cone" />Cylinder<Rule /><Icon n="meshGrey" s={15} /></ItemName>{toggles(true)}</Item>
      </Tree>
      <TreeTrack><Thumb $size={78} /></TreeTrack>
    </TreeRow>
    <HTrack><HThumb /></HTrack>
    <Corner at="bl" />
  </Outliner>
);

/* ---------- properties ---------- */

const Context = styled.div`
  display: flex;
  align-items: center;
  gap: 6px;
  height: 32px;
  padding-left: 4px;
  border-bottom: 1px solid #3e3e3e;
  box-shadow: 0 1px 0 #868686;
`;
const IconText = styled(Button)`
  justify-content: flex-start;
  padding-left: 2px;
`;
const Line = styled.div<{ $top?: number }>`
  display: flex;
  align-items: center;
  margin-top: ${(p) => p.$top ?? 0}px;
  > :last-child { flex: 1; }
`;
const FixedLabel = styled.span`
  width: 56px;
  padding: 1px 0 0 5px;
  flex: none;
`;

const Properties = () => (
  <Shelf>
    <ShelfBody>
      <Context><Icon n="pin" /><Icon n="scene" />Scene</Context>
      <Panel title="Render">
        <Group $cols="1fr 1fr 1fr">
          <IconText><Icon n="cameraNew" s={13} />Render</IconText>
          <IconText><Icon n="clap" s={13} />Animati</IconText>
          <IconText><Icon n="speaker" />&nbsp;Audio</IconText>
        </Group>
        <Line $top={4}>
          <FixedLabel>Display:</FixedLabel>
          <Group $cols="minmax(0, 1fr) 16px"><Select name="Display" value="Image Editor" /><IconButton n="unlock" name="Lock interface" /></Group>
        </Line>
      </Panel>
      <Panel title="Dimensions">
        <Group $cols="minmax(0, 1fr) 17px 17px">
          <Select name="Render Presets" value="Render Presets" pad={4} /><IconButton n="plus" name="Add preset" s={12} /><IconButton n="minus" name="Remove preset" s={12} />
        </Group>
        <Columns $top={3}>
          <div>
            <Label>Resolution:</Label>
            <Group $h={52} $r={9}><Num label="X:" value="1920 px" /><Num label="Y:" value="1080 px" /><Num value="50%" name="Resolution percentage" bare fill /></Group>
            <Label>Aspect Ratio:</Label>
            <Group $h={35} $r={9}><Num label="X:" value="1.000" /><Num label="Y:" value="1.000" /></Group>
            <Columns $top={1}><Tick label="B" /><Tick label="Cr" $dim /></Columns>
          </div>
          <div>
            <Label>Frame Range:</Label>
            <Group $h={52} $r={9}><Num label="Start Fra:" value="1" /><Num label="End F:" value="250" /><Num label="Frame S:" value="1" /></Group>
            <Label>Frame Rate:</Label>
            <Group><Select name="Frame Rate" value="24 fps" /></Group>
            <Label>Time Remapp...</Label>
            <Group $cols="1fr 1fr" $r={9}><Num value="10" name="Old" /><Num value="10" name="New" /></Group>
          </div>
        </Columns>
      </Panel>
      <Panel title="Anti-Aliasing" check="on">
        <Columns>
          <Group $cols="1fr 1fr 1fr 1fr">
            <Button $bg={menu} $white>5</Button><Button $bg={blue}>8</Button><Button $bg={menu} $white>11</Button><Button $bg={menu} $white>16</Button>
          </Group>
          <Group><Select name="Filter" value="Mitchell-Ne..." pad={5} /></Group>
        </Columns>
        <Columns $top={1}>
          <Tick label="Full Sam..." />
          <Group $r={9}><Num label=":" name="Filter size" value="1.000 px" /></Group>
        </Columns>
      </Panel>
      <Panel title="Sampled Motion Blur" check="off" closed />
      <Panel title="Shading" closed />
      <Panel title="Performance" closed />
      <Panel title="Post Processing" closed />
      <Panel title="Metadata" closed />
      <Panel title="Output">
        <Group $cols="minmax(0, 1fr) 17px"><TextInput aria-label="Output path" defaultValue="/tmp/" /><IconButton n="folder" name="Browse" /></Group>
        <Columns $top={3}><Tick label="Overwrite" on /><Tick label="File Exte..." on /></Columns>
        <Columns $top={1}><Tick label="Placehol..." /><Tick label="Cache Re..." /></Columns>
        <Columns $top={4}><Group /><Group /></Columns>
      </Panel>
    </ShelfBody>
    <Track $bottom={5}><Thumb $size={85} /></Track>
  </Shelf>
);

const Menus = ({ items, w }: { items: string[]; w: number }) => (
  <MenuList $w={w}>{items.map((t) => <MenuItem key={t}>{t}</MenuItem>)}</MenuList>
);
const Stats = styled.span`
  white-space: nowrap;
`;

export default function App() {
  return (
    <Shell>
      <Global />
      <Bar $dark>
        <Type n="info" name="Editor type" />
        <Menus w={165} items={["File", "Render", "Window", "Help"]} />
        <Group $w={168} $cols="26px minmax(0, 1fr) 17px 17px">
          <DropIcon aria-label="Screen layout"><Icon n="layout" /><UpDown /></DropIcon>
          <TextInput aria-label="Layout name" defaultValue="Default" />
          <IconButton n="plus" name="Add layout" s={12} /><IconButton n="x" name="Delete layout" s={12} />
        </Group>
        <Group $w={168} $cols="26px minmax(0, 1fr) 17px 17px">
          <DropIcon aria-label="Scene data"><Icon n="scene" /><UpDown /></DropIcon>
          <TextInput aria-label="Scene name" defaultValue="Scene" />
          <IconButton n="plus" name="Add scene" s={12} /><IconButton n="x" name="Delete scene" s={12} />
        </Group>
        <Push $w={3} />
        <Group $w={98}><Select name="Render engine" value="Blender Render" /></Group>
        <Push $w={6} />
        <Icon n="blender" />
        <Stats>&nbsp;v2.77 | Verts:2,176/4,696 | Edges:4,320/9,262 | Faces:2,144/4,572 | Tris:9,252 | Mem:16.38M | Cylinder</Stats>
        <Corner at="bl" />
        <Corner at="tr" />
      </Bar>
      <Main>
        <Column>
          <ViewRow>
            <ToolShelf />
            <Stage>
              <Wireframe />
              <Caption $at="top">Front Ortho</Caption>
              <Caption $at="bottom">(1) Cylinder</Caption>
            </Stage>
            <ViewPanel />
            <Corner at="tr" />
          </ViewRow>
          <Bar $dark>
            <Type n="view3d" name="Editor type" />
            <Menus w={153} items={["View", "Select", "Add", "Mesh"]} />
            <Group $w={86}><IconSelect><Icon n="edit" /><Select name="Mode" value="Edit Mode" pad={4} /></IconSelect></Group>
            <Type n="wire" name="Viewport shading" w={30} />
            <Type n="pivot" name="Pivot point" w={30} />
            <Group $w={132} $cols="17px 16px 16px 16px minmax(0, 1fr)">
              <IconButton n="axes" name="Manipulator" bg={menu} /><IconButton n="arrow" name="Translate" bg={blue} />
              <IconButton n="arc" name="Rotate" bg={menu} /><IconButton n="scale" name="Scale" bg={menu} />
              <Select name="Transform orientation" value="Global" />
            </Group>
            <Group $w={52} $cols="1fr 1fr 1fr"><IconButton n="vert" name="Vertex select" /><IconButton n="edge" name="Edge select" /><IconButton n="face" name="Face select" bg="#696969" /></Group>
            <Type n="dot" name="Proportional editing" w={30} />
            <Group $w={65} $cols="16px minmax(0, 1fr) 16px">
              <IconButton n="magnet" name="Snap" /><DropIcon aria-label="Snap element"><Icon n="ruler" /><UpDown /></DropIcon><IconButton n="snap" name="Snap to grid" />
            </Group>
            <Group $w={18}><IconButton n="merge" name="Auto merge" /></Group>
            <Group $w={34} $cols="1fr 1fr"><IconButton n="cameraNew" name="Render view" /><IconButton n="clap" name="Render animation" /></Group>
            <Corner at="bl" />
          </Bar>
          <Timeline />
          <Bar>
            <Type n="clock" name="Editor type" />
            <Menus w={185} items={["View", "Marker", "Frame", "Playback"]} />
            <Group $w={34} $cols="1fr 1fr"><IconButton n="pie" name="Use preview range" /><IconButton n="lock" name="Lock time" /></Group>
            <Group $w={199} $r={9} $cols="1fr 1fr"><Num label="Start:" value="1" /><Num label="End:" value="250" /></Group>
            <Group $w={78} $r={9}><Num value="1" name="Current frame" /></Group>
            <Push $w={4} />
            <Group $w={105} $cols="repeat(6, 1fr)">
              {[["first", "Jump to start"], ["back", "Previous key"], ["rplay", "Play reversed"], ["play", "Play"], ["fwd", "Next key"], ["last", "Jump to end"]].map(([n, t]) => <IconButton key={n} n={n} name={t} />)}
            </Group>
            <Group $w={101}><Select name="Sync mode" value="No Sync" /></Group>
            <Push $w={3} />
            <Group $w={18}><IconButton n="rec" name="Record" /></Group>
            <Group $w={149} $cols="minmax(0, 1fr) 17px 17px">
              <IconInput><Icon n="keyset" /><input aria-label="Keying set" /></IconInput><IconButton n="key" name="Insert keyframe" /><IconButton n="keyOff" name="Delete keyframe" />
            </Group>
            <Corner at="bl" />
          </Bar>
        </Column>
        <Side>
          <Bar $h={23}>
            <Type n="tree" name="Editor type" />
            <Menus w={81} items={["View", "Search"]} />
            <Group $w={70}><Button $bg={menu} $white $left>All Scenes</Button></Group>
            <Corner at="tr" />
          </Bar>
          <OutlinerView />
          <Bar $h={23} $flush>
            <Type n="props" name="Editor type" />
            <Group $w={164} $cols="repeat(9, 17px)">
              {["camera", "layers", "scene", "world", "cube", "link", "wrench", "mesh", "world"].map((n, i) => (
                <IconButton key={i} n={n} name={`Properties tab ${i + 1}`} bg={i ? "#5a5a5a" : blue} />
              ))}
            </Group>
            <Corner at="tr" />
          </Bar>
          <Properties />
        </Side>
      </Main>
    </Shell>
  );
}
